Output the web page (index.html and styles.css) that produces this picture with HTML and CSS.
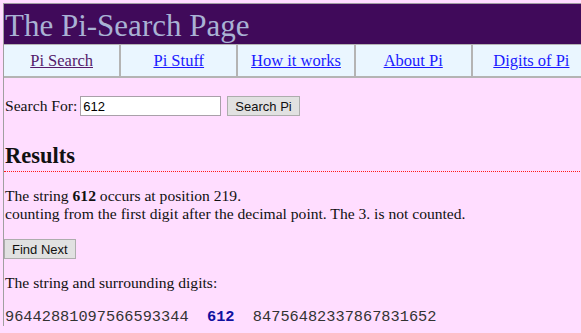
FILE: index.html
```html
<!DOCTYPE html>
<html lang="en">
<head>
    <meta charset="UTF-8">
    <title>The Pi-Search Page</title>
    <link rel="stylesheet" href="styles.css">
</head>
<body>
    <div class="page">
        <div class="header">The Pi-Search Page</div>

        <div class="nav">
            <a class="visited" href="#">Pi Search</a>
            <a href="#">Pi Stuff</a>
            <a href="#">How it works</a>
            <a href="#">About Pi</a>
            <a href="#">Digits of Pi</a>
        </div>

        <div class="content">
            <form class="search">
                <label for="q">Search For:</label>
                <input type="text" id="q" value="612">
                <button type="button">Search Pi</button>
            </form>

            <h2 class="results">Results</h2>

            <p>The string <b>612</b> occurs at position 219.<br>
            counting from the first digit after the decimal point. The 3. is not counted.</p>

            <button type="button" class="next">Find Next</button>

            <p>The string and surrounding digits:</p>

            <p class="digits">96442881097566593344&nbsp;&nbsp;<b>612</b>&nbsp;&nbsp;84756482337867831652</p>
        </div>
    </div>
</body>
</html>
```

FILE: styles.css
```css
body {
    margin: 0;
    background: #ffddff;
    font-family: "Liberation Serif", "Times New Roman", serif;
    font-size: 15.6px;
    color: #111;
    overflow: hidden;
}
.page {
    width: 586px;
    margin: 3px 0 0 3px;
    border-top: 1px solid #a0a0a0;
    border-left: 1px solid #a0a0a0;
}
.header {
    background: #400a5a;
    color: #a9b2d4;
    font-size: 31px;
    line-height: 41px;
    padding: 1px 0 0 1px;
    height: 40px;
    box-sizing: border-box;
}
.nav {
    display: grid;
    grid-template-columns: repeat(5, 1fr);
    background: #eaf6ff;
    border-top: 1px solid #b4b4b4;
    border-bottom: 2px solid #b4b4b4;
}
.nav a {
    display: block;
    text-align: center;
    font-size: 16.5px;
    line-height: 31px;
    color: #1a1aff;
    border-right: 2px solid #b4b4b4;
}
.nav a:last-child {
    border-right: none;
}
.nav a.visited {
    color: #551a6b;
}
.content {
    width: 577px;
    padding: 18px 0 0 1px;
}
.search {
    display: flex;
    align-items: center;
    margin: 0;
}
.search label {
    margin-right: 3px;
}
.search input {
    width: 141px;
    height: 20px;
    box-sizing: border-box;
    padding: 1px 2px;
    border: 1px solid #a9a0a9;
    font-family: "Liberation Sans", Arial, sans-serif;
    font-size: 13px;
    margin: 0 6px 0 0;
}
button {
    font-family: "Liberation Sans", Arial, sans-serif;
    font-size: 13px;
    background: #e1e1e1;
    border: 1px solid #adadad;
    height: 20px;
    padding: 0 7px;
    color: #111;
}
.results {
    font-size: 22.5px;
    margin: 28px 0 0 -1px;
    padding: 0 0 3px 1px;
    border-bottom: 1px dotted #ff1a1a;
    line-height: 24px;
}
p {
    margin: 15px 0;
    line-height: 18px;
}
.next {
    margin: 1px 0 0 -1px;
}
.digits {
    font-family: "Liberation Mono", "Courier New", monospace;
    font-size: 15.3px;
    margin-top: 16px;
    color: #333;
}
.digits b {
    color: #1010a0;
}
```
